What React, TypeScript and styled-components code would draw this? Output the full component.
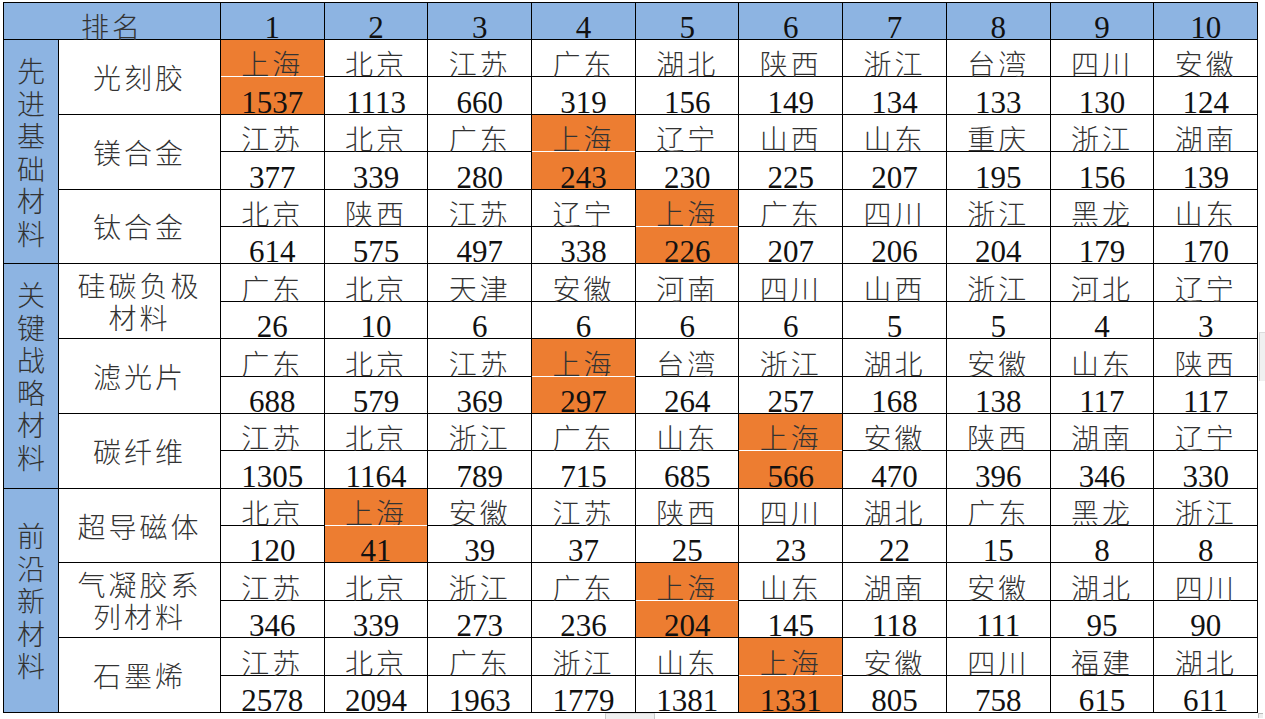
import React from "react";
import styled, { createGlobalStyle, css } from "styled-components";

const GlobalStyle = createGlobalStyle`
  html, body { margin: 0; padding: 0; background: #ffffff; }
  #root { width: 1265px; height: 719px; }
`;

const BLUE = "#8db4e2";
const ORANGE = "#ed7d31";
const CJK = `"Noto Sans CJK SC", "Noto Sans CJK JP", sans-serif`;
const NUM = `"Liberation Serif", "Times New Roman", serif`;
const CJK_COLOR = "#333333";
const NUM_COLOR = "#111111";

const Page = styled.div`
  position: relative;
  width: 1265px;
  height: 719px;
  box-sizing: border-box;
  padding: 2px 0 0 3px;
  overflow: hidden;
  background: #fff;
`;

const Sheet = styled.div`
  display: grid;
  box-sizing: border-box;
  width: 1255px;
  height: 711px;
  padding: 1px;
  gap: 1px;
  background: #000;
  grid-template-columns: 54px 161px repeat(10, 1fr);
  grid-template-rows: 36px repeat(18, 1fr);
`;

const cellBase = css`
  display: flex;
  justify-content: center;
  min-width: 0;
  min-height: 0;
  overflow: visible;
  position: relative;
`;

const HeaderCell = styled.div<{ $span?: number; $cjk?: boolean }>`
  ${cellBase};
  align-items: flex-end;
  background: ${BLUE};
  grid-column: span ${(p) => p.$span ?? 1};
  font-family: ${(p) => (p.$cjk ? CJK : NUM)};
  font-weight: ${(p) => (p.$cjk ? 300 : 400)};
  font-size: ${(p) => (p.$cjk ? "28px" : "31px")};
  letter-spacing: ${(p) => (p.$cjk ? "3px" : "0")};
  line-height: 28px;
  color: ${(p) => (p.$cjk ? CJK_COLOR : NUM_COLOR)};
`;

const HeaderText = styled.span<{ $cjk?: boolean }>`
  margin-bottom: ${(p) => (p.$cjk ? "-1px" : "-3px")};
`;

const CategoryCell = styled.div`
  ${cellBase};
  grid-row: span 6;
  background: ${BLUE};
  flex-direction: column;
  align-items: center;
  font-family: ${CJK};
  font-weight: 300;
  font-size: 28px;
  line-height: 32.5px;
  color: ${CJK_COLOR};
`;

const NameCell = styled.div`
  ${cellBase};
  grid-row: span 2;
  background: #fff;
  flex-direction: column;
  align-items: center;
  font-family: ${CJK};
  font-weight: 300;
  font-size: 28px;
  letter-spacing: 3px;
  line-height: 32px;
  color: ${CJK_COLOR};
  text-align: center;
`;

const DataCell = styled.div<{ $hl?: boolean; $num?: boolean }>`
  ${cellBase};
  align-items: flex-end;
  background: ${(p) => (p.$hl ? ORANGE : "#fff")};
  font-family: ${(p) => (p.$num ? NUM : CJK)};
  font-weight: ${(p) => (p.$num ? 400 : 300)};
  font-size: ${(p) => (p.$num ? "31px" : "28px")};
  letter-spacing: ${(p) => (p.$num ? "0" : "3px")};
  line-height: 28px;
  color: ${(p) => (p.$num ? NUM_COLOR : CJK_COLOR)};
  ${(p) =>
    p.$hl &&
    p.$num &&
    css`
      &::before {
        content: "";
        position: absolute;
        left: 0;
        right: 0;
        top: -1px;
        height: 1px;
        background: #fff;
      }
    `}
`;

const CellText = styled.span<{ $num?: boolean }>`
  margin-bottom: ${(p) => (p.$num ? "-3px" : "-1px")};
  white-space: nowrap;
`;

const ScrollThumbV = styled.div`
  position: absolute;
  left: 1259px;
  top: 332px;
  width: 6px;
  height: 48px;
  background: #f0f0f0;
  border-left: 1px solid #cfcfcf;
  border-top: 1px solid #dcdcdc;
`;

const ScrollThumbH = styled.div`
  position: absolute;
  left: 605px;
  top: 713px;
  width: 48px;
  height: 6px;
  background: #f0f0f0;
  border-left: 1px solid #c8c8c8;
  border-right: 1px solid #c8c8c8;
  border-top: 1px solid #dcdcdc;
`;

const Corner = styled.div`
  position: absolute;
  left: 1258px;
  top: 713px;
  width: 4px;
  height: 4px;
  border-left: 1px solid #bbb;
  border-top: 1px solid #bbb;
  background: #eee;
`;

type Material = {
  name: string[];
  cities: string[];
  values: number[];
  hl: number | null;
};

type Group = { title: string; items: Material[] };

const groups: Group[] = [
  {
    title: "先进基础材料",
    items: [
      {
        name: ["光刻胶"],
        cities: ["上海", "北京", "江苏", "广东", "湖北", "陕西", "浙江", "台湾", "四川", "安徽"],
        values: [1537, 1113, 660, 319, 156, 149, 134, 133, 130, 124],
        hl: 0,
      },
      {
        name: ["镁合金"],
        cities: ["江苏", "北京", "广东", "上海", "辽宁", "山西", "山东", "重庆", "浙江", "湖南"],
        values: [377, 339, 280, 243, 230, 225, 207, 195, 156, 139],
        hl: 3,
      },
      {
        name: ["钛合金"],
        cities: ["北京", "陕西", "江苏", "辽宁", "上海", "广东", "四川", "浙江", "黑龙", "山东"],
        values: [614, 575, 497, 338, 226, 207, 206, 204, 179, 170],
        hl: 4,
      },
    ],
  },
  {
    title: "关键战略材料",
    items: [
      {
        name: ["硅碳负极", "材料"],
        cities: ["广东", "北京", "天津", "安徽", "河南", "四川", "山西", "浙江", "河北", "辽宁"],
        values: [26, 10, 6, 6, 6, 6, 5, 5, 4, 3],
        hl: null,
      },
      {
        name: ["滤光片"],
        cities: ["广东", "北京", "江苏", "上海", "台湾", "浙江", "湖北", "安徽", "山东", "陕西"],
        values: [688, 579, 369, 297, 264, 257, 168, 138, 117, 117],
        hl: 3,
      },
      {
        name: ["碳纤维"],
        cities: ["江苏", "北京", "浙江", "广东", "山东", "上海", "安徽", "陕西", "湖南", "辽宁"],
        values: [1305, 1164, 789, 715, 685, 566, 470, 396, 346, 330],
        hl: 5,
      },
    ],
  },
  {
    title: "前沿新材料",
    items: [
      {
        name: ["超导磁体"],
        cities: ["北京", "上海", "安徽", "江苏", "陕西", "四川", "湖北", "广东", "黑龙", "浙江"],
        values: [120, 41, 39, 37, 25, 23, 22, 15, 8, 8],
        hl: 1,
      },
      {
        name: ["气凝胶系", "列材料"],
        cities: ["江苏", "北京", "浙江", "广东", "上海", "山东", "湖南", "安徽", "湖北", "四川"],
        values: [346, 339, 273, 236, 204, 145, 118, 111, 95, 90],
        hl: 4,
      },
      {
        name: ["石墨烯"],
        cities: ["江苏", "北京", "广东", "浙江", "山东", "上海", "安徽", "四川", "福建", "湖北"],
        values: [2578, 2094, 1963, 1779, 1381, 1331, 805, 758, 615, 611],
        hl: 5,
      },
    ],
  },
];

export default function App() {
  const cells: React.ReactNode[] = [];
  cells.push(
    <HeaderCell key="h-rank" $span={2} $cjk>
      <HeaderText $cjk>排名</HeaderText>
    </HeaderCell>
  );
  for (let i = 1; i <= 10; i++) {
    cells.push(
      <HeaderCell key={`h-${i}`}>
        <HeaderText>{i}</HeaderText>
      </HeaderCell>
    );
  }
  groups.forEach((g, gi) => {
    g.items.forEach((m, mi) => {
      if (mi === 0) {
        cells.push(
          <CategoryCell key={`c-${gi}`}>
            {Array.from(g.title).map((ch, ci) => (
              <span key={ci}>{ch}</span>
            ))}
          </CategoryCell>
        );
      }
      cells.push(
        <NameCell key={`n-${gi}-${mi}`}>
          {m.name.map((line, li) => (
            <span key={li}>{line}</span>
          ))}
        </NameCell>
      );
      m.cities.forEach((c, ci) => {
        cells.push(
          <DataCell key={`ct-${gi}-${mi}-${ci}`} $hl={m.hl === ci}>
            <CellText>{c}</CellText>
          </DataCell>
        );
      });
      m.values.forEach((v, vi) => {
        cells.push(
          <DataCell key={`v-${gi}-${mi}-${vi}`} $hl={m.hl === vi} $num>
            <CellText $num>{v}</CellText>
          </DataCell>
        );
      });
    });
  });

  return (
    <>
      <GlobalStyle />
      <Page>
        <Sheet>{cells}</Sheet>
        <ScrollThumbV />
        <ScrollThumbH />
        <Corner />
      </Page>
    </>
  );
}
